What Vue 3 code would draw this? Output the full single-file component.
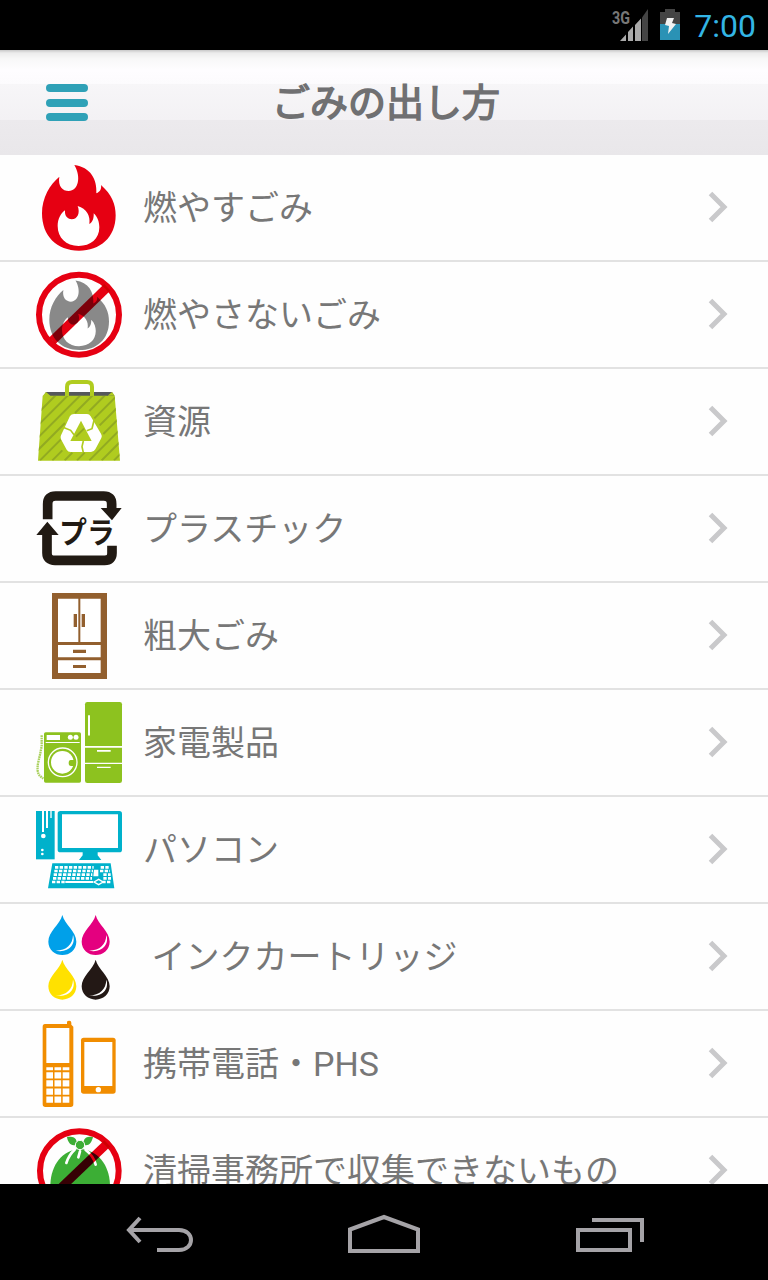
<template>
  <div class="screen">
    <!-- ステータスバー -->
    <div class="status">
      <svg class="signal" viewBox="0 0 40 34">
        <text class="net" x="1" y="16" textLength="18" lengthAdjust="spacingAndGlyphs">3G</text>
        <path fill="#444" d="M31 9.500L37 1V33H31Z" />
        <path fill="#aaa" d="M9 33L15 26.500V33ZM17 33V24L22 18.500V33ZM24 33V17L30 10.500V33Z" />
      </svg>
      <svg class="battery" viewBox="0 0 20 32">
        <path fill="#444" d="M5 0H15V3H20V16H0V3H5Z" />
        <path fill="#2a92b5" d="M0 15H20V31H0Z" />
        <path fill="#f2f2f2" d="M7 9H14L12 14L16 15L8 25L9 17L5 16Z" />
      </svg>
      <span class="clock">7:00</span>
    </div>

    <!-- ヘッダー -->
    <header class="header">
      <button class="menu">
        <span></span>
        <span></span>
        <span></span>
      </button>
      <h1 class="title">ごみの出し方</h1>
    </header>

    <!-- 一覧 -->
    <ul class="list">
      <li v-for="item in items" :key="item.icon" class="row">
        <svg class="icon" :viewBox="`0 ${-item.top} 360 321`">
          <g v-if="item.icon === 'burn'">
            <path fill="#e60012" :d="flame" />
            <path fill="#fff" :d="innerFlame" />
          </g>
          <g v-else-if="item.icon === 'noburn'">
            <g transform="translate(34.500 28) scale(.81)">
              <path fill="#898989" :d="flame" />
              <path fill="#fff" :d="innerFlame" />
            </g>
            <circle class="ban" cx="177" cy="152" r="120" stroke-width="18" />
            <path class="ban multiply" d="M97 230L262 70" stroke-width="27" />
          </g>
          <g v-else-if="item.icon === 'bag'">
            <path fill="#55585a" d="M78 60H276L284 73H70Z" />
            <path fill="#b0cc1f" d="M78 60L92 72H68ZM276 60L262 72H285ZM68 71H284L300 266H54Z" />
            <clipPath id="bagBody"><path d="M68 71H284L300 266H54Z" /></clipPath>
            <path fill="none" stroke="#b0cc1f" stroke-width="12" d="M141 74V45Q141 30 156 30H201Q216 30 216 45V74" />
            <path fill="#fff" d="M150 132Q154 126 162 126H201Q208 126 212 133L243 185Q247 191 244 198L226 232Q222 240 213 240H152Q144 240 140 233L123 202Q120 196 123 190Z" />
            <path fill="#b0cc1f" d="M183 146L215 207H151Z" />
            <path fill="none" stroke="#b0cc1f" stroke-width="5" d="M127 165L152 175L162 188M223 141L216 170L200 176M190 207L186 224L190 242" />
            <path class="stripes" clip-path="url(#bagBody)" d="M20 157L110 67M20 194L147 67M20 231L184 67M20 268L135 153M165 123L221 67M60 265L122 203M208 117L258 67M97 265L127 235M223 139L295 67M134 265L157 242M239 160L310 89M171 265L194 242M250 186L310 126M208 265L310 163M245 265L310 200M282 265L310 237M168 194L192 170" />
          </g>
          <g v-else-if="item.icon === 'plastic'">
            <path class="plaFrame" d="M83 118V72Q83 48 107 48H251Q275 48 275 72V90M276 197V219Q276 241 254 241H105Q81 241 81 219V158" />
            <path fill="#211a13" d="M242 84H305L276 121ZM49 165L82 125L116 165Z" />
            <text class="pla" x="118" y="190" textLength="166" lengthAdjust="spacingAndGlyphs">プラ</text>
          </g>
          <g v-else-if="item.icon === 'closet'">
            <path fill="#925f2e" d="M96 21H261V279H96Z" />
            <path fill="#fff" d="M114 38H175V168H114ZM181 38H242V168H181ZM114 177H242V214H114ZM114 223H242V261H114Z" />
            <path fill="#925f2e" d="M161 84H171V123H161ZM185 84H195V123H185ZM159 191H198V201H159ZM159 237H198V246H159Z" />
          </g>
          <g v-else-if="item.icon === 'appliance'">
            <rect x="72" y="121" width="111" height="151" rx="5" fill="#8dc21f" />
            <rect x="195" y="30" width="111" height="243" rx="7" fill="#8dc21f" />
            <path fill="#fff" d="M80 129H120V144H80ZM77 150H179V153H77ZM195 162H306V167H195ZM195 212H306V216H195ZM231 174H272V179H231ZM231 224H272V228H231Z" />
            <rect x="204" y="69" width="6" height="62" rx="3" fill="#fff" />
            <circle cx="151" cy="136" r="7.500" fill="#fff" />
            <circle cx="168" cy="136" r="7.500" fill="#fff" />
            <circle cx="128" cy="211" r="43" fill="none" stroke="#fff" stroke-width="4" />
            <circle cx="127" cy="211" r="34" fill="#fff" />
            <path fill="#8dc21f" d="M164 204H152Q146 204 146 213Q146 222 153 222H164Z" />
            <path class="hose" d="M65 130V162Q61 185 56 205Q48 238 59 251L70 260" />
          </g>
          <g v-else-if="item.icon === 'pc'">
            <path fill="#00b1cb" d="M48 33H104V178H48Z" />
            <path fill="#fff" d="M66 33H72V96H66ZM78 33H84V84H78ZM91 33H95V54H91Z" />
            <circle cx="70" cy="108" r="7" fill="#fff" />
            <circle cx="67" cy="150" r="4" fill="#fff" />
            <circle cx="67" cy="162" r="4" fill="#fff" />
            <rect x="113" y="33" width="193" height="124" rx="8" fill="#00b1cb" />
            <path fill="#fff" d="M126 43H294V144H126Z" />
            <path fill="#00b1cb" d="M188 155H233V166L244 180H177L188 166ZM97 190H272L283 265H84Z" />
            <path class="keys" d="M105 202H221M242 202H268M103 213H219M240 213H270M101 224H217M250 224H272M99 235H216M250 235H273" />
            <path class="keys" d="M96 246H135M247 246H275" />
            <path fill="#fff" d="M136 243H219V249H136ZM222 209H235V229H220Z" />
            <path fill="none" stroke="#fff" stroke-width="4" d="M222 246L236 238L249 246L236 254Z" />
          </g>
          <g v-else-if="item.icon === 'ink'">
            <g v-for="drop in drops" :key="drop.color" :transform="`translate(${drop.x} ${drop.y})`">
              <path :fill="drop.color" d="M0 0C7 29 42 49 42 80C42 104 22 120 0 120C-22 120 -42 104 -42 80C-42 49 -7 29 0 0Z" />
              <path fill="#fff" d="M32 60C42 88 18 115 -20 107C13 107 31 88 32 60Z" />
            </g>
          </g>
          <g v-else-if="item.icon === 'phone'">
            <path fill="#f18d00" d="M75 36H141V30Q141 26 148 26Q154 26 154 32V38L160 44V277Q160 285 152 285H76Q68 285 68 277V44Q68 36 75 36Z" />
            <path fill="#fff" d="M79 48H148V153H79Z" />
            <path stroke="#fff" stroke-width="9" stroke-dasharray="20 4.500" d="M79 170H149" />
            <path stroke="#fff" stroke-width="19" stroke-dasharray="20 4.500" d="M79 190H149M79 214H149M79 239H149M79 263H149" />
            <rect x="183" y="77" width="104" height="168" rx="8" fill="#f18d00" />
            <path fill="#fff" d="M193 90H277V222H193Z" />
            <circle cx="235" cy="233" r="8" fill="#fff" />
          </g>
          <g v-else>
            <path fill="#3cae35" d="M180 410C125 415 92 460 91 520H270C269 460 235 415 180 410Z" />
            <path fill="#3cae35" d="M168 399C151 404 143 388 141 375C155 373 168 376 170 389L191 389C193 376 205 373 219 375C215 392 207 403 192 399Z" />
            <circle cx="180" cy="399" r="14" fill="#3cae35" stroke="#fff" stroke-width="3" />
            <path fill="none" stroke="#fff" stroke-width="8" stroke-linecap="round" d="M164 413Q147 428 139 453M180 418L175 436M197 414Q221 432 227 458" />
            <circle class="ban" cx="178" cy="476" r="118" stroke-width="18" />
            <path class="ban multiply" d="M95 554L262 394" stroke-width="26" />
          </g>
        </svg>
        <span class="label">{{ item.label }}</span>
        <svg class="arrow" viewBox="0 0 20 32">
          <path d="M2.500 2.500L16 16L2.500 29.500" />
        </svg>
      </li>
    </ul>

    <!-- ナビゲーションバー -->
    <nav class="nav">
      <svg viewBox="126 1214 68 40" width="68" height="40">
        <path d="M140 1218L129 1230L140 1242M129 1230H179C195 1230 195 1250 179 1250H157" />
      </svg>
      <svg viewBox="347 1212 76 42" width="76" height="42">
        <path d="M350 1228.500L384 1216L418 1228.500V1250H350Z" />
      </svg>
      <svg viewBox="575 1214 70 40" width="70" height="40">
        <path d="M578 1230H630V1250H578ZM592 1220H642V1242" />
      </svg>
    </nav>
  </div>
</template>

<script setup>
const flame =
  'M163 27C211 33 232 70 229 112C241 107 245 98 243 87C276 116 287 145 287 178C287 245 240 284 177 284C110 284 66 240 66 172C66 125 90 85 118 62C113 90 128 105 146 105C176 104 184 62 163 27Z'
const innerFlame =
  'M173 150C200 158 212 180 208 204C218 200 222 185 221 172C234 184 238 200 238 214C238 249 212 270 176 270C138 270 113 245 113 210C113 190 122 172 135 163C133 182 145 190 155 190C173 190 181 170 173 150Z'

const drops = [
  { x: 127, y: 27, color: '#00a0e9' },
  { x: 227, y: 27, color: '#e4007f' },
  { x: 127, y: 161, color: '#ffe100' },
  { x: 227, y: 161, color: '#231815' }
]

const items = [
  { icon: 'burn', top: 3, label: '燃やすごみ' },
  { icon: 'noburn', top: 6, label: '燃やさないごみ' },
  { icon: 'bag', top: 9, label: '資源' },
  { icon: 'plastic', top: 12, label: 'プラスチック' },
  { icon: 'closet', top: 9, label: '粗大ごみ' },
  { icon: 'appliance', top: 6, label: '家電製品' },
  { icon: 'pc', top: 9, label: 'パソコン' },
  { icon: 'ink', top: 6, label: ' インクカートリッジ' },
  { icon: 'phone', top: 3, label: '携帯電話・PHS' },
  { icon: 'bulk', top: -318, label: '清掃事務所で収集できないもの' }
]
</script>

<style>
body {
  margin: 0;
  background: #000;
}
</style>

<style scoped>
.screen {
  width: 768px;
  height: 1280px;
  display: flex;
  flex-direction: column;
  overflow: hidden;
  background: #000;
  font-family: Roboto, "Noto Sans CJK JP", sans-serif;
}

.status {
  flex: none;
  height: 50px;
  display: flex;
  align-items: center;
  justify-content: flex-end;
  box-sizing: border-box;
  padding-right: 12px;
}

.signal {
  width: 40px;
  height: 34px;
  margin-right: 9px;
  overflow: visible;
}

.net {
  fill: #777;
  font-size: 18px;
  font-weight: 700;
}

.battery {
  width: 20px;
  height: 32px;
  margin-right: 14px;
}

.clock {
  color: #33b5e5;
  font-size: 32px;
  line-height: 50px;
  padding-top: 2px;
}

/* ヘッダー */
.header {
  flex: none;
  height: 105px;
  box-sizing: border-box;
  padding: 0 46px;
  display: grid;
  grid-template-columns: 42px 1fr 38px;
  align-items: center;
  background: linear-gradient(
    180deg,
    #c8c8c8 0,
    #ececec 3px,
    #f8f8f8 9px,
    #fefdff 20px,
    #fcfbfd 34px,
    #f7f6f8 34px,
    #f3f1f4 70px,
    #eceaed 70px,
    #e9e7ea 105px
  );
}

.menu {
  display: flex;
  flex-direction: column;
  gap: 6.5px;
  padding: 0;
  border: none;
  background: none;
}

.menu span {
  width: 42px;
  height: 8px;
  border-radius: 4px;
  background: #2fa1b7;
}

.title {
  margin: 0;
  padding-top: 2px;
  text-align: center;
  color: #707072;
  font-size: 38px;
  font-weight: 400;
  line-height: 103px;
  -webkit-text-stroke: 1.5px #707072;
}

/* 一覧 */
.list {
  flex: 1;
  min-height: 0;
  margin: 0;
  padding: 0;
  overflow: hidden;
  list-style: none;
  background: #fefefe;
}

.row {
  height: 107px;
  box-sizing: border-box;
  border-bottom: 2px solid #e2e2e2;
  padding: 0 40px 0 20px;
  display: flex;
  align-items: flex-start;
}

.icon {
  flex: none;
  width: 120px;
  height: 107px;
  isolation: isolate;
}

.ban {
  fill: none;
  stroke: #e60012;
}

.multiply {
  mix-blend-mode: multiply;
}

.stripes {
  fill: none;
  stroke: #92aa22;
  stroke-width: 6;
}

.plaFrame {
  fill: none;
  stroke: #211a13;
  stroke-width: 29;
}

.pla {
  fill: #211a13;
  font-family: "Noto Sans CJK JP", sans-serif;
  font-size: 90px;
  font-weight: 700;
}

.hose {
  fill: none;
  stroke: #a9d05c;
  stroke-width: 7;
  stroke-dasharray: 5 2;
}

.keys {
  fill: none;
  stroke: #fff;
  stroke-width: 8;
  stroke-dasharray: 10 4;
}

.label {
  flex: 1;
  margin-left: 3px;
  color: #777;
  font-size: 34px;
  line-height: 107px;
  white-space: pre;
}

.arrow {
  flex: none;
  width: 20px;
  height: 32px;
  margin-top: 36px;
}

.arrow path {
  fill: none;
  stroke: #c9c9cb;
  stroke-width: 5;
}

/* ナビゲーションバー */
.nav {
  flex: none;
  height: 96px;
  box-sizing: border-box;
  padding: 3px 123px 0 126px;
  display: flex;
  align-items: center;
  justify-content: space-between;
}

.nav path {
  fill: none;
  stroke: #a5a3a7;
  stroke-width: 4;
}
</style>
